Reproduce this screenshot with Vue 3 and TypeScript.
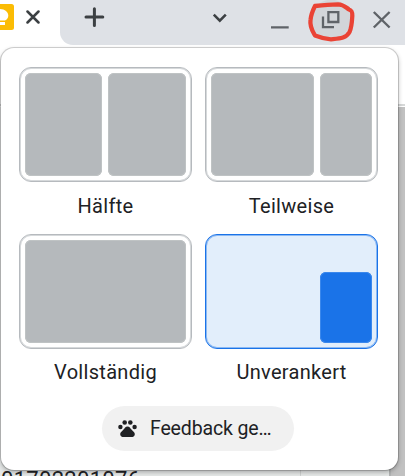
<script setup lang="ts">
interface Pane {
  kind: string
}
interface Option {
  label: string
  panes: Pane[]
  selected?: boolean
}
const options: Option[] = [
  { label: 'Hälfte', panes: [{ kind: 'half-left' }, { kind: 'half-right' }] },
  { label: 'Teilweise', panes: [{ kind: 'wide' }, { kind: 'narrow' }] },
  { label: 'Vollständig', panes: [{ kind: 'full' }] },
  { label: 'Unverankert', panes: [{ kind: 'float' }], selected: true },
]
</script>

<template>
  <div class="screen">
    <header class="titlebar">
      <div class="tab">
        <svg class="favicon" width="14" height="26" viewBox="0 0 14 26">
          <path d="M0 0H11.5Q14 0 14 2.5V23.500Q14 26 11.500 26H0Z" fill="#fbbc04" />
          <path d="M0 5C5 5 8.300 8 8.300 11.500C8.300 14 7 15.500 5 16.500H0ZM0 18H5V21H0Z" fill="#fff" />
        </svg>
        <svg class="tab-close" width="14" height="14" viewBox="0 0 14 14">
          <path d="M1.500 1.500L12.500 12.500M12.500 1.500L1.500 12.500" stroke="#3c4043" stroke-width="2.500" stroke-linecap="round" />
        </svg>
      </div>
      <div class="strip">
        <svg width="345" height="45" viewBox="60 0 345 45" fill="none">
          <path d="M94.400 8.700V25.500M86 17.100H102.800" stroke="#3c4043" stroke-width="3" stroke-linecap="round" />
          <path d="M213.800 14.700L219.800 20.700L225.800 14.700" stroke="#3c4043" stroke-width="2.600" />
          <path d="M271 27.300H288.700" stroke="#5f6368" stroke-width="2.300" />
          <circle cx="331" cy="19.500" r="19.800" fill="#d2d5d9" />
          <path d="M328.400 12.100H338.300V22H328.400Z" stroke="#5f6368" stroke-width="2.300" />
          <path d="M323 16.500V27.100H334" stroke="#5f6368" stroke-width="2.300" />
          <path d="M373.800 12L389.600 27.500M389.600 12L373.800 27.500" stroke="#5f6368" stroke-width="2.400" />
          <path d="M315 6C323 5 332 4.300 338 4.300C344 4.500 346 7.500 349 9.500C352 10.500 352.500 12 352.300 16C352 22 351.500 28 349.500 32C346 38.500 340 38.500 331 39.300C325 39 320 37.500 315 35.500C313 32 309.500 27 310.500 20C311 14 313 10 315 6Z" stroke="#ea4335" stroke-width="4.300" stroke-linejoin="round" />
        </svg>
      </div>
    </header>
    <div class="page">
      <div class="page-top"></div>
      <div class="page-body"></div>
      <div class="page-foot"><span class="digits">01702201076</span></div>
    </div>

    <section class="popup">
      <div class="options">
        <div v-for="o in options" :key="o.label" class="option">
          <div class="preview" :class="{ selected: o.selected }">
            <div v-for="p in o.panes" :key="p.kind" class="pane" :class="p.kind"></div>
          </div>
          <div class="label">{{ o.label }}</div>
        </div>
      </div>
      <button class="feedback">
        <svg width="19" height="18" viewBox="0 0 19 18" fill="#202124">
          <circle cx="2.400" cy="7" r="2.200" />
          <circle cx="6.700" cy="2.500" r="2.300" />
          <circle cx="12.300" cy="2.500" r="2.300" />
          <circle cx="16.600" cy="7" r="2.200" />
          <path d="M9.500 6.500C7.500 6.500 6.700 8.300 5.300 9.800C3.800 11.400 2 12.500 2.200 14.500C2.500 16.600 4 17 5.500 17H13.500C15 17 16.500 16.600 16.800 14.500C17 12.500 15.200 11.400 13.700 9.800C12.300 8.300 11.500 6.500 9.500 6.500Z" />
        </svg>
        <span>Feedback ge…</span>
      </button>
    </section>
  </div>
</template>

<style>
body {
  overflow: hidden;
}
</style>

<style scoped>
.screen {
  position: relative;
  display: flex;
  flex-direction: column;
  width: 405px;
  height: 476px;
  overflow: hidden;
  background: #fff;
  font-family: Roboto, sans-serif;
  color: #202124;
}
.titlebar {
  display: flex;
  height: 45px;
}
.tab {
  display: flex;
  gap: 12px;
  width: 60px;
  padding-top: 4px;
  box-sizing: border-box;
}
.tab-close {
  margin-top: 6px;
}
.strip {
  width: 345px;
  height: 45px;
  overflow: hidden;
  background: #dee1e6;
  border-bottom-left-radius: 13px;
}
.strip svg {
  display: block;
}
.page {
  display: flex;
  flex-direction: column;
  flex: 1;
}
.page-top {
  height: 59px;
  border-bottom: 2px solid #d6d8d8;
}
.page-body {
  flex: 1;
  margin-top: 1px;
  background: linear-gradient(to right, #eceeee 50%, #c1c1c1 50%);
}
.page-foot {
  height: 14px;
  overflow: hidden;
  background: linear-gradient(to right, #e6e9e8 300px, #cfd2d1 300px, #cfd2d1 301px, #e6e9e8 301px, #e6e9e8 389px, #b2b4b4 389px, #b2b4b4 391px, #c1c1c1 391px);
}
.digits {
  display: block;
  padding: 5px 0 0 1px;
  font-size: 22px;
  line-height: 26px;
  letter-spacing: 0.300px;
}
.popup {
  position: absolute;
  left: 1px;
  top: 48px;
  display: flex;
  flex-direction: column;
  width: 397px;
  height: 422px;
  box-sizing: border-box;
  padding: 19px 0 0 18px;
  border-radius: 13px;
  background: #fff;
  box-shadow: 0 0 0 1px rgba(0, 0, 0, 0.16), 0 2px 5px rgba(0, 0, 0, 0.3);
}
.options {
  display: grid;
  grid-template-columns: 173px 173px;
  grid-template-rows: 167px 167px;
  column-gap: 13px;
}
.preview {
  display: flex;
  gap: 6px;
  height: 115px;
  box-sizing: border-box;
  padding: 5px;
  border: 1px solid #b6babe;
  border-radius: 12px;
  box-shadow: inset 0 0 0 1px #d6d9db;
}
.pane {
  border-radius: 6px;
  background: #b5b9bc;
  box-shadow: inset 0 0 0 1px #bfc3c4;
}
.half-left {
  width: 77px;
}
.half-right,
.full {
  flex: 1;
}
.wide {
  width: 103px;
}
.narrow {
  flex: 1;
}
.preview.selected {
  justify-content: flex-end;
  align-items: flex-end;
  border-color: #1a73e8;
  background: #e2eefb;
  box-shadow: inset 0 0 0 1px #8bb9f3;
}
.float {
  width: 52px;
  height: 71px;
  background: #1a73e8;
  box-shadow: inset 0 0 0 1px #3b88ec;
}
.label {
  margin-top: 12px;
  font-size: 20px;
  line-height: 24px;
  letter-spacing: 0.300px;
  text-align: center;
}
.option:nth-child(n + 3) .label {
  margin-top: 11px;
}
.feedback {
  display: flex;
  align-items: center;
  gap: 13px;
  width: 192px;
  height: 45px;
  box-sizing: border-box;
  margin: 5px 0 0 83px;
  padding: 0 0 0 16px;
  border: 0;
  border-radius: 23px;
  background: #f1f1f1;
  font: 19.500px/24px Roboto, sans-serif;
  letter-spacing: -0.150px;
  color: #202124;
}
</style>
